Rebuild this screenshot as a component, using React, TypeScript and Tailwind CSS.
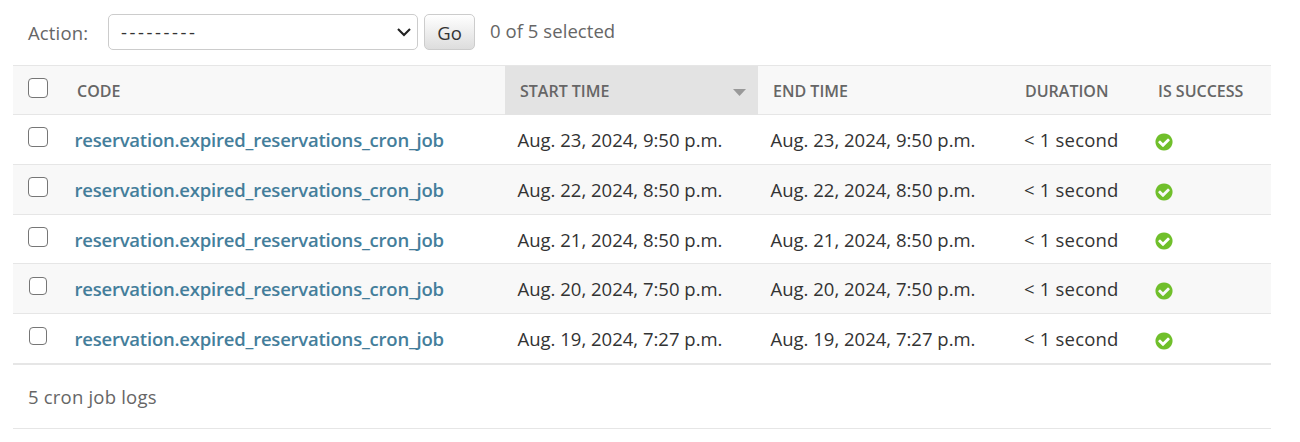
import React from "react";

const rows = [
  { time: "Aug. 23, 2024, 9:50 p.m.", height: "h-[50px]", box: "ml-[15px] mt-[12px] size-[20px]", bg: "bg-white", icon: "mt-[17px]" },
  { time: "Aug. 22, 2024, 8:50 p.m.", height: "h-[50px]", box: "ml-[15px] mt-[12px] size-[20px]", bg: "bg-[#f8f8f8]", icon: "mt-[17px]" },
  { time: "Aug. 21, 2024, 8:50 p.m.", height: "h-[49px]", box: "ml-[15px] mt-[12px] size-[20px]", bg: "bg-white", icon: "mt-[16px]" },
  { time: "Aug. 20, 2024, 7:50 p.m.", height: "h-[50px]", box: "ml-[16px] mt-[13px] size-[18px]", bg: "bg-[#f8f8f8]", icon: "mt-[17px]" },
  { time: "Aug. 19, 2024, 7:27 p.m.", height: "h-[51px]", box: "ml-[16px] mt-[13px] size-[18px]", bg: "bg-white", icon: "mt-[17px]" },
];

const columns = "grid grid-cols-[47px_445px_253px_252px_132px_129px]";

function Checkbox({ className, label }: { className: string; label: string }) {
  return (
    <input
      type="checkbox"
      aria-label={label}
      className={`block appearance-none rounded-[4px] border-[1.5px] border-[#767676] bg-white ${className}`}
    />
  );
}

function SuccessIcon({ className }: { className: string }) {
  return (
    <svg viewBox="0 0 1792 1792" className={`ml-[12px] block size-[20px] ${className}`} role="img" aria-label="True">
      <path
        fill="#70bf2b"
        d="M1412 734q0-28-18-46l-91-90q-19-19-45-19t-45 19l-408 407-226-226q-19-19-45-19t-45 19l-91 90q-18 18-18 46 0 27 18 45l362 362q19 19 45 19 27 0 46-19l543-543q18-18 18-45zm252 162q0 209-103 385.500t-279.500 279.500-385.500 103-385.500-103-279.500-279.500-103-385.500 103-385.500 279.500-279.500 385.500-103 385.500 103 279.500 279.500 103 385.500z"
      />
    </svg>
  );
}

export default function App() {
  return (
    <main className="flex h-[442px] w-[1300px] flex-col overflow-hidden bg-white pl-[13px] font-['Open_Sans',sans-serif] text-[18.5px] leading-[24px] text-[#333]">
      <div className="flex h-[65px] w-[1258px] pl-[15px] pt-[14px] text-[#666]">
        <label className="flex w-[80px] pt-[7px]" htmlFor="action">
          <span className="tracking-[0.15px]">Action:</span>
        </label>
        <button id="action" className="flex h-[36px] w-[310px] items-center justify-between rounded-[5px] border border-[#ccc] bg-white pl-[12px] pr-[6px] text-[#333]">
          <span className="tracking-[2.55px]">---------</span>
          <svg viewBox="0 0 14 9" className="h-[9px] w-[14px]" fill="none" stroke="#222" strokeWidth="2.1">
            <path d="M1 1l6 6 6-6" />
          </svg>
        </button>
        <button className="ml-[6px] h-[36px] w-[51px] rounded-[5px] border border-[#ccc] bg-linear-to-b from-white to-[#ddd] pt-px text-[#333]">
          Go
        </button>
        <span className="ml-[15px] pt-[5px] tracking-[0.06px]">0 of 5 selected</span>
      </div>

      <div className={`${columns} h-[50px] w-[1258px] border-y border-[#e6e6e6] bg-[#f8f8f8] text-[16px] font-semibold leading-[50px] text-[#666]`}>
        <Checkbox label="Select all" className="ml-[15px] mt-[12px] size-[20px]" />
        <div className="pl-[17px]">CODE</div>
        <div className="flex justify-between bg-[#e3e3e3] pl-[15px] pr-[12px]">
          <span>START TIME</span>
          <svg viewBox="0 0 13 7" className="mt-[23px] h-[7px] w-[13px]">
            <path d="M0 0h13L6.500 7z" fill="#999" />
          </svg>
        </div>
        <div className="pl-[15px]">END TIME</div>
        <div className="pl-[15px]">DURATION</div>
        <div className="pl-[16px]">IS SUCCESS</div>
      </div>

      {rows.map((r, i) => (
        <div key={r.time} className={`${columns} ${r.height} ${r.bg} w-[1258px] border-[#e6e6e6] ${i === 4 ? "border-b-2" : "border-b"}`}>
          <Checkbox label="Select row" className={r.box} />
          <div className="pl-[14.5px] pt-[13px] font-semibold tracking-[-0.22px] text-[#447e9b]">
            <a>reservation.expired_reservations_cron_job</a>
          </div>
          <div className="pl-[12.5px] pt-[13px]"><span>{r.time}</span></div>
          <div className="pl-[12.5px] pt-[13px]"><span>{r.time}</span></div>
          <div className="pl-[14px] pt-[13px] tracking-[0.2px]"><span>&lt; 1 second</span></div>
          <SuccessIcon className={r.icon} />
        </div>
      ))}

      <div className="h-[64px] w-[1258px] border-b border-[#e6e6e6] pl-[15px] pt-[20px] tracking-[0.2px] text-[#666]">
        <span>5 cron job logs</span>
      </div>
    </main>
  );
}
